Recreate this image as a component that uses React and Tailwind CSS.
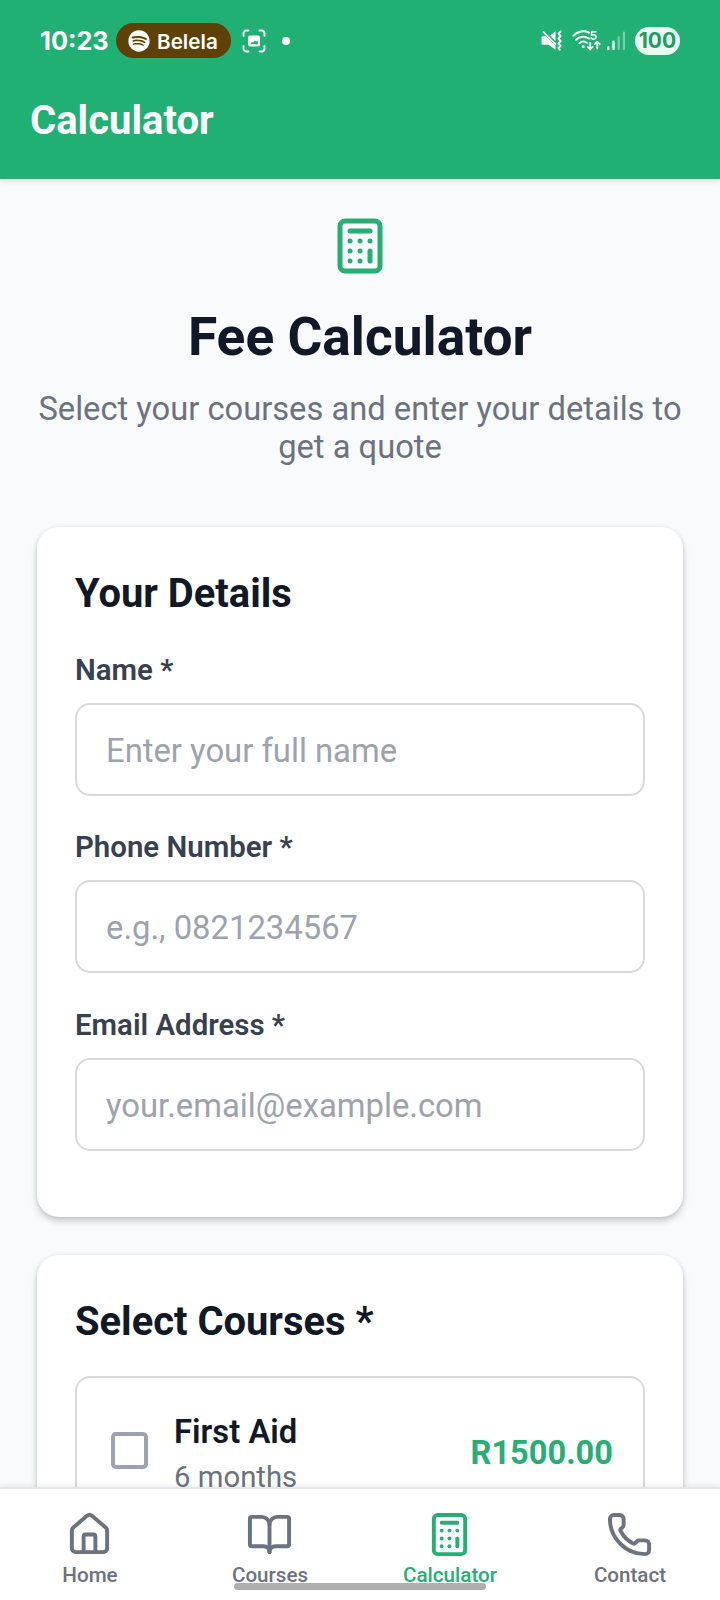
import { House, BookOpen, Calculator, Phone } from 'lucide-react';
import { FaSpotify } from 'react-icons/fa';

function CaptureIcon() {
  return (
    <svg className="ml-[11px] h-6 w-6" viewBox="0 0 24 24" fill="none">
      <path d="M1.5 7V4.5a3 3 0 0 1 3-3H6.5M17.5 1.5h2a3 3 0 0 1 3 3V7M22.5 17v2.5a3 3 0 0 1-3 3h-2M6.500 22.500h-2a3 3 0 0 1-3-3V17" stroke="#fff" strokeWidth="1.900" strokeLinecap="round" />
      <path fillRule="evenodd" d="M8 6.500h8a2 2 0 0 1 2 2v7a2 2 0 0 1-2 2H8a2 2 0 0 1-2-2v-7a2 2 0 0 1 2-2zM8.300 15.200h7.600v-3.800l-1.700 1-1.200-1-2 2.200-1.200-.6z" fill="#fff" />
    </svg>
  );
}

function MuteVibrateIcon() {
  return (
    <svg className="h-[21px] w-[21px]" viewBox="0 0 21 21" fill="none">
      <path d="M.5 7.200a1 1 0 0 1 1-1h3.400l9.600 9.300v4.300L7.500 14.800h-6a1 1 0 0 1-1-1z" fill="#fff" />
      <path d="M14.500 1.200v9.800L9.200 5.600z" fill="#fff" />
      <path d="M2.300 1.800l12 12.200" stroke="#fff" strokeWidth="1.700" strokeLinecap="round" />
      <path d="M19.600 1.300l-2.100 2.500 2.100 2.400-2.100 2.400 2.100 2.400-2.100 2.400 2.100 2.400-2.100 2.200 1.200 1.800" stroke="#fff" strokeWidth="1.900" strokeLinecap="round" strokeLinejoin="round" />
    </svg>
  );
}

function WifiIcon() {
  return (
    <svg className="ml-[10px] h-[21px] w-[29px]" viewBox="0 0 29 21" fill="none" stroke="#fff" strokeLinecap="round" strokeLinejoin="round">
      <path d="M1.300 5.800C5.500 1.200 12.300.2 16.800 2.600" strokeWidth="2" />
      <path d="M4 9.800c3.500-3.600 9-4.200 13-1.300" strokeWidth="2" />
      <path d="M7.300 13.200c2.300-2 5.200-2.100 7.600-.4" strokeWidth="2" />
      <circle cx="11.200" cy="16.400" r="1.500" fill="#fff" stroke="none" />
      <path d="M24 1.700h-4.200l-.4 3.600c3-1.300 4.900-.3 4.700 1.800-.2 2.100-3.300 2.600-5 1.100" strokeWidth="1.600" />
      <path d="M18.200 13v6M15.800 17l2.400 2.500 2.400-2.500" strokeWidth="1.800" />
      <path d="M25.300 18.500v-6.300M22.800 14.200l2.500-2.500 2.500 2.500" strokeWidth="1.800" />
    </svg>
  );
}

function SignalIcon() {
  return (
    <svg className="ml-[6px] h-5 w-[19px]" viewBox="0 0 19 20" fill="#fff">
      <rect x="0" y="15.200" width="2.400" height="4" rx="1.200" />
      <rect x="5.300" y="9.500" width="2.400" height="9.700" rx="1.200" />
      <rect x="10.600" y="5" width="2.200" height="14.200" rx="1.100" opacity=".4" />
      <rect x="15.800" y=".5" width="2.200" height="18.700" rx="1.100" opacity=".4" />
    </svg>
  );
}

function StatusBar() {
  return (
    <div className="flex h-[81px] items-center pr-10 pl-10 text-white font-[Inter,sans-serif]">
      <span className="w-[76px] pt-px text-[25.300px] leading-8 font-bold">10:23</span>
      <span className="flex h-[35px] w-[115px] items-center rounded-full bg-[#5f4005] pl-3">
        <FaSpotify className="h-[22px] w-[22px] shrink-0" />
        <span className="ml-[7px] pt-0.5 text-[20.700px] leading-7 font-semibold">Belela</span>
      </span>
      <CaptureIcon />
      <span className="mt-px ml-4 h-2 w-2 rounded-full bg-white" />
      <span className="flex-1" />
      <MuteVibrateIcon />
      <WifiIcon />
      <SignalIcon />
      <span className="ml-[9px] flex h-7 w-[45px] items-center justify-center rounded-full bg-[#e9f8f1] pt-px text-[21px] font-bold text-[#219a66]">100</span>
    </div>
  );
}

function Field({ label, placeholder, type }) {
  return (
    <label className="flex h-[177.300px] flex-col">
      <span className="text-[29.400px] leading-9 font-semibold text-[#374151]">{label}</span>
      <input
        type={type}
        placeholder={placeholder}
        className="mt-[15px] h-[93px] w-full rounded-[15px] border-2 border-[#d8dadc] bg-white px-[29px] pt-[3px] text-[32.800px] text-[#111827] outline-none placeholder:text-[#9ca3af]"
      />
    </label>
  );
}

function Card({ title, className, children }) {
  return (
    <section className={`rounded-[22px] bg-white px-[38px] pt-[43px] shadow-[0_4px_7px_rgba(0,0,0,0.2),0_0_4px_rgba(0,0,0,0.07)] ${className}`}>
      <h2 className="text-[39.900px] leading-[48px] font-bold text-[#111827]">{title}</h2>
      {children}
    </section>
  );
}

function Course({ name, duration, price }) {
  return (
    <div className="mt-[30px] flex h-[152px] items-center rounded-[15px] border-2 border-[#d8dadc] pr-[30px] pl-[34px]">
      <span className="mb-[3px] h-[37px] w-[37px] rounded-[5px] border-4 border-[#9ca3af]" />
      <div className="ml-[26px] flex flex-1 flex-col pt-1">
        <span className="text-[32.800px] leading-[46px] font-semibold text-[#111827]">{name}</span>
        <span className="text-[29.300px] leading-[44px] text-[#6b7280]">{duration}</span>
      </div>
      <span className="pt-[2px] text-[32.600px] leading-10 font-bold text-[#27ae73]">{price}</span>
    </div>
  );
}

const tabs = [
  { label: 'Home', Icon: House },
  { label: 'Courses', Icon: BookOpen },
  { label: 'Calculator', Icon: Calculator, active: true },
  { label: 'Contact', Icon: Phone },
];

function TabBar() {
  return (
    <nav className="relative z-10 grid h-[113px] shrink-0 grid-cols-4 border-t-2 border-[#e5e7eb] bg-white shadow-[0_-1px_6px_rgba(0,0,0,0.08)]">
      {tabs.map(({ label, Icon, active }) => (
        <a key={label} className={`flex flex-col items-center pt-[22px] ${active ? 'text-[#27ae73]' : 'text-[#6b7280]'}`}>
          <Icon className="mr-px h-[47px] w-[47px]" strokeWidth={2} />
          <span className="mt-[5px] text-[20.600px] leading-6 font-medium">{label}</span>
        </a>
      ))}
      <span className="absolute bottom-[10px] left-[234px] h-[7px] w-[252px] rounded-full bg-[#afafaf]" />
    </nav>
  );
}

export default function App() {
  return (
    <div className="flex h-[1600px] w-[720px] flex-col overflow-hidden bg-[#f9fafc] font-[Roboto,sans-serif]">
      <header className="relative z-10 h-[179px] shrink-0 bg-[#21b073] shadow-[0_2px_6px_rgba(0,0,0,0.12)]">
        <StatusBar />
        <h1 className="mt-4 pl-[30px] text-[40px] leading-[48px] font-bold text-white">Calculator</h1>
      </header>
      <main className="min-h-0 flex-1 overflow-hidden px-[37px]">
        <div className="flex h-[348px] flex-col items-center pt-[37px] text-center">
          <Calculator className="h-[60px] w-[60px] text-[#27ae73]" strokeWidth={2} />
          <h2 className="mt-[29px] text-[53.300px] leading-[64px] font-bold text-[#111827]">Fee Calculator</h2>
          <p className="mt-[21px] text-[32.700px] leading-[38px] text-[#6b7280]">
            Select your courses and enter your details to
            <br />
            get a quote
          </p>
        </div>
        <Card title="Your Details" className="h-[690px]">
          <div className="mt-[34px]">
            <Field label="Name *" placeholder="Enter your full name" type="text" />
            <Field label="Phone Number *" placeholder="e.g., 0821234567" type="tel" />
            <Field label="Email Address *" placeholder="your.email@example.com" type="email" />
          </div>
        </Card>
        <Card title="Select Courses *" className="mt-[38px] h-[400px]">
          <Course name="First Aid" duration="6 months" price="R1500.00" />
        </Card>
      </main>
      <TabBar />
    </div>
  );
}
